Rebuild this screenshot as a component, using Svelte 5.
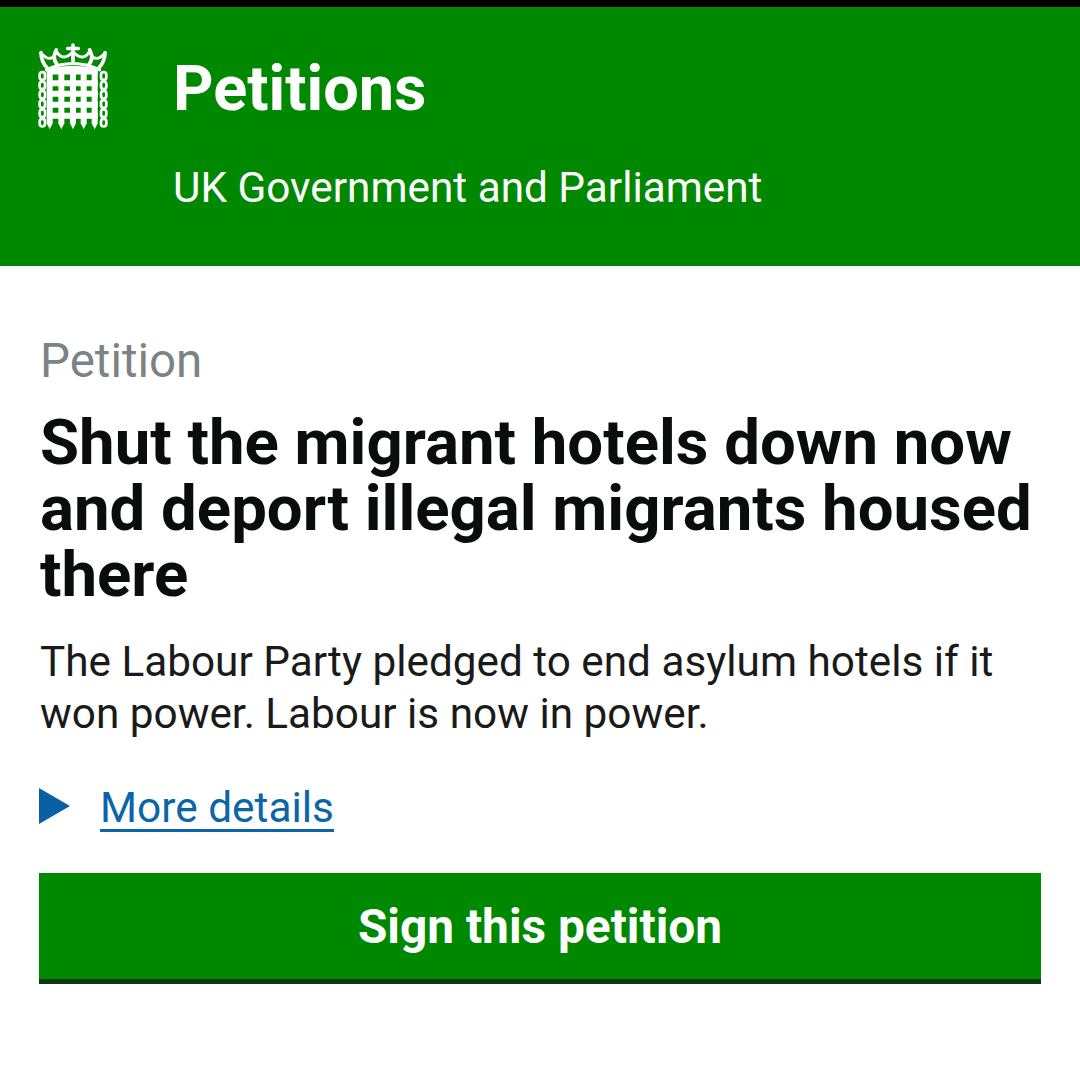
<script>
  const bars = [90, 125, 160, 192, 225];
  const rails = [125, 160, 192, 225, 258];
  const links = [0, 1, 2, 3, 4, 5];
</script>

<div class="topline"></div>
<header class="masthead">
  <svg class="crest" viewBox="55 40 210 260" aria-hidden="true">
    <g fill="none" stroke="#fff" stroke-width="11" stroke-linecap="round">
      <path d="M84 116 Q64 96 64 68" />
      <path d="M112 104 Q96 84 110 60" />
      <path d="M160 94 V46 M144 56 H176" />
      <path d="M208 104 Q224 84 210 60" />
      <path d="M236 116 Q256 96 256 68" />
      <path d="M64 70 Q96 104 110 64 M110 64 Q130 98 160 66 Q190 98 210 64 M210 64 Q224 104 256 70" stroke-width="9" />
      <path d="M80 120 Q160 82 240 120" stroke-width="9" />
    </g>
    <path d="M90 116 Q160 100 230 116 V124 H90 Z" fill="#fff" />
    <g stroke="#fff" stroke-width="18">
      {#each bars as x}
        <line x1={x} y1="118" x2={x} y2="282" />
        <path d="M{x - 9} 280 L{x} 298 L{x + 9} 280 Z" fill="#fff" stroke="none" />
      {/each}
      {#each rails as y}
        <line x1="82" y1={y} x2="234" y2={y} />
      {/each}
    </g>
    <g fill="none" stroke="#fff" stroke-width="8">
      {#each links as i}
        <rect x="60" y={127 + i * 28} width="16" height="23" rx="8" />
        <rect x="244" y={127 + i * 28} width="16" height="23" rx="8" />
      {/each}
    </g>
  </svg>
  <div class="brand">
    <div class="name">Petitions</div>
    <div class="sub">UK Government and Parliament</div>
  </div>
</header>

<main class="content">
  <div class="text">
    <div class="caption">Petition</div>
    <h1>Shut the migrant hotels down now and deport illegal migrants housed there</h1>
    <p>The Labour Party pledged to end asylum hotels if it won power. Labour is now in power.</p>
    <div class="details">
      <span class="arrow"></span>
      <a href="#details">More details</a>
    </div>
  </div>
  <button type="button">Sign this petition</button>
</main>

<style>
  :global(body) {
    background: #fff;
    font-family: Roboto, "Liberation Sans", sans-serif;
  }

  .topline {
    height: 7px;
    background: #000;
  }

  .masthead {
    display: flex;
    height: 259px;
    box-sizing: border-box;
    padding: 36px 0 0 38px;
    gap: 65px;
    background: #008800;
    color: #fff;
  }

  .crest {
    width: 70px;
    height: 87px;
  }

  .name {
    font-size: 63px;
    font-weight: 700;
    line-height: 92px;
  }

  .sub {
    margin-top: 30px;
    font-size: 42.3px;
    line-height: 46px;
  }

  .content {
    padding: 69px 39px 0;
  }

  .text {
    padding-left: 1px;
  }

  .caption {
    color: #7c8286;
    font-size: 47.5px;
    line-height: 52px;
  }

  h1 {
    margin: 23px 0 0;
    color: #0b0c0c;
    font-size: 63.5px;
    font-weight: 700;
    line-height: 66px;
  }

  p {
    margin: 28px 0 0;
    color: #1a1a1a;
    font-size: 42.3px;
    line-height: 52px;
  }

  .details {
    display: flex;
    align-items: center;
    gap: 30px;
    margin-top: 42px;
  }

  .arrow {
    width: 0;
    height: 0;
    margin: -5px 0 0 -1px;
    border-top: 18px solid transparent;
    border-bottom: 18px solid transparent;
    border-left: 31px solid #0b5fa5;
  }

  .details a {
    color: #0b65a8;
    font-size: 42.4px;
    line-height: 52px;
    text-underline-offset: 7px;
    text-decoration-thickness: 3px;
  }

  button {
    display: block;
    width: 100%;
    height: 111px;
    margin-top: 39px;
    padding-top: 3px;
    border: 0;
    border-bottom: 5px solid #0b3a12;
    background: #008800;
    color: #fff;
    font-family: inherit;
    font-size: 47.8px;
    font-weight: 700;
  }
</style>
